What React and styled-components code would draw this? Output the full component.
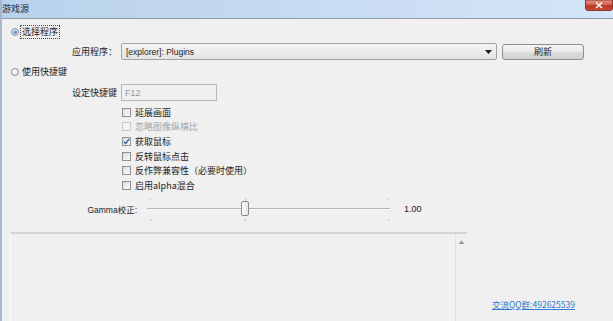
import React from 'react'
import styled, { createGlobalStyle } from 'styled-components'

const GlobalStyle = createGlobalStyle`
  html, body {
    margin: 0;
    padding: 0;
    overflow: hidden;
    background: #f0f0f0;
  }
  body {
    font-family: "Liberation Sans", "Noto Sans CJK SC", sans-serif;
    font-size: 9px;
    color: #1b1b1b;
  }
`

const options = [
  { label: '延展画面' },
  { label: '忽略图像纵横比', disabled: true },
  { label: '获取鼠标', checked: true },
  { label: '反转鼠标点击' },
  { label: '反作弊兼容性（必要时使用）' },
  { label: '启用alpha混合' },
]

const gamma = { min: 0.2, max: 2.2, value: 1 }

const CloseIcon = () => (
  <svg width="28" height="11" viewBox="0 0 28 11">
    <defs>
      <linearGradient id="closeRed" x1="0" y1="0" x2="0" y2="1">
        <stop offset="0" stopColor="#e69a8a" />
        <stop offset="0.45" stopColor="#d35a48" />
        <stop offset="0.55" stopColor="#bb3322" />
        <stop offset="1" stopColor="#cc4d38" />
      </linearGradient>
    </defs>
    <path d="M0.5 0 V8 Q0.5 10.5 3 10.5 H25 Q27.5 10.5 27.5 8 V0 Z" fill="url(#closeRed)" stroke="#8a3328" />
    <path d="M11 2.5 L17 8 M17 2.5 L11 8" stroke="#ffffff" strokeWidth="1.6" />
  </svg>
)

const App = () => {
  const trackWidth = 243
  const thumbLeft = Math.round(3 + (gamma.value - gamma.min) / (gamma.max - gamma.min) * (trackWidth - 6)) - 4

  return (
    <>
      <GlobalStyle />
      <Window>
        <TitleBar>
          <Title>游戏源</Title>
          <CloseButton aria-label="关闭">
            <CloseIcon />
          </CloseButton>
        </TitleBar>

        <Content>
          <RadioRow $top={6}>
            <Radio $checked />
            <RadioLabel $focused>选择程序</RadioLabel>
          </RadioRow>

          <FieldRow $top={4}>
            <FieldLabel>应用程序：</FieldLabel>
            <Combo>
              <ComboText>[explorer]: Plugins</ComboText>
              <svg width="7" height="4" viewBox="0 0 7 4">
                <path d="M0 0 H7 L3.5 4 Z" fill="#1a1a1a" />
              </svg>
            </Combo>
            <PushButton>刷新</PushButton>
          </FieldRow>

          <RadioRow $top={5}>
            <Radio />
            <RadioLabel>使用快捷键</RadioLabel>
          </RadioRow>

          <FieldRow $top={5}>
            <FieldLabel>设定快捷键</FieldLabel>
            <HotkeyInput>F12</HotkeyInput>
          </FieldRow>

          <CheckList>
            {options.map((o) => (
              <CheckRow key={o.label} $disabled={o.disabled}>
                <CheckBox $disabled={o.disabled}>
                  {o.checked && (
                    <svg width="7" height="7" viewBox="0 0 7 7">
                      <path d="M0.8 3.6 L2.7 5.6 L6.2 0.9" stroke="#2c4f93" strokeWidth="1.3" fill="none" />
                    </svg>
                  )}
                </CheckBox>
                <span>{o.label}</span>
              </CheckRow>
            ))}
          </CheckList>

          <GammaRow>
            <GammaLabel>Gamma校正:</GammaLabel>
            <Slider>
              <svg width={trackWidth} height="25" viewBox={`0 0 ${trackWidth} 25`}>
                <line x1="0" y1="11.5" x2={trackWidth} y2="11.5" stroke="#b3b3b3" />
                <line x1="0" y1="12.5" x2={trackWidth} y2="12.5" stroke="#fbfbfb" />
                {[3, thumbLeft + 4, trackWidth - 2].map((x) => (
                  <g key={x} stroke="#bdbdbd">
                    <line x1={x + 0.5} y1="1.5" x2={x + 0.5} y2="3.5" />
                    <line x1={x + 0.5} y1="22" x2={x + 0.5} y2="24" />
                  </g>
                ))}
              </svg>
              <Thumb style={{ left: thumbLeft }} />
            </Slider>
            <GammaValue>{gamma.value.toFixed(2)}</GammaValue>
          </GammaRow>

          <BottomRow>
            <LogBox>
              <ScrollBar>
                <svg width="7" height="4" viewBox="0 0 7 4">
                  <path d="M0.5 4 L3.5 0.5 L6.5 4 Z" fill="#9a9a9a" />
                </svg>
              </ScrollBar>
            </LogBox>
            <GroupLink href="#">交流QQ群:492625539</GroupLink>
          </BottomRow>
        </Content>
      </Window>
    </>
  )
}

export default App

const Window = styled.div`
  width: 613px;
  height: 321px;
  box-sizing: border-box;
  border-left: 2px solid #a6b9d0;
  background: #f0f0f0;
  display: flex;
  flex-direction: column;
  overflow: hidden;
`

const TitleBar = styled.div`
  height: 18px;
  flex-shrink: 0;
  display: flex;
  align-items: flex-start;
  background: linear-gradient(to right, #b9d1eb, #c8dcf2 55%, #d3e5f7);
  border-bottom: 1px solid #8d9aa9;
`

const Title = styled.span`
  line-height: 17px;
  font-family: "Noto Sans CJK SC", sans-serif;
  font-size: 9px;
  color: #1e2a38;
`

const CloseButton = styled.div`
  margin-left: auto;
  flex: 0 0 28px;
  width: 28px;
  height: 11px;

  svg {
    display: block;
  }
`

const Content = styled.div`
  flex: 1;
  display: flex;
  flex-direction: column;
  min-height: 0;
`

const RadioRow = styled.div`
  margin-top: ${(p) => p.$top}px;
  height: 14px;
  padding-left: 9px;
  display: flex;
  align-items: center;
  gap: 2px;
`

const Radio = styled.span`
  position: relative;
  width: 8px;
  height: 8px;
  box-sizing: border-box;
  border-radius: 50%;
  border: 1px solid #8c8f94;
  background: radial-gradient(circle at 40% 35%, #ffffff, #dcdcdc);

  &::after {
    content: "";
    display: ${(p) => (p.$checked ? 'block' : 'none')};
    position: absolute;
    left: 1px;
    top: 1px;
    width: 4px;
    height: 4px;
    border-radius: 50%;
    background: radial-gradient(circle at 35% 35%, #8fc3f2, #2563b3);
  }
`

const RadioLabel = styled.span`
  font-family: "Noto Sans CJK SC", sans-serif;
  line-height: 12px;
  padding: 0 1px;
  outline: ${(p) => (p.$focused ? '1px dotted #444' : 'none')};
`

const FieldRow = styled.div`
  margin-top: ${(p) => p.$top}px;
  height: 17px;
  padding-left: 70px;
  display: flex;
  align-items: center;
`

const FieldLabel = styled.span`
  width: 49px;
  font-family: "Noto Sans CJK SC", sans-serif;
  white-space: nowrap;
`

const Combo = styled.div`
  width: 376px;
  height: 17px;
  box-sizing: border-box;
  padding: 0 4px 0 4px;
  border: 1px solid #a3a3a3;
  border-radius: 2px;
  background: linear-gradient(#f4f4f4, #e3e3e3);
  display: flex;
  align-items: center;
  justify-content: space-between;
`

const ComboText = styled.span`
  font-size: 8.5px;
  color: #222;
`

const PushButton = styled.div`
  margin-left: 5px;
  width: 82px;
  height: 16px;
  box-sizing: border-box;
  border: 1px solid #8e8f8f;
  border-radius: 3px;
  background: linear-gradient(#f5f5f5, #e9e9e9 50%, #dcdcdc 51%, #d2d2d2);
  font-family: "Noto Sans CJK SC", sans-serif;
  display: flex;
  align-items: center;
  justify-content: center;
`

const HotkeyInput = styled.div`
  width: 96px;
  height: 17px;
  box-sizing: border-box;
  padding-left: 3px;
  border: 1px solid #b9b9b9;
  background: #f0f0f0;
  color: #9a9a9a;
  display: flex;
  align-items: center;
`

const CheckList = styled.div`
  margin-top: 4px;
  padding-left: 120px;
  display: flex;
  flex-direction: column;
`

const CheckRow = styled.div`
  height: 14.6px;
  display: flex;
  align-items: center;
  gap: 4px;
  font-family: "Noto Sans CJK SC", sans-serif;
  color: ${(p) => (p.$disabled ? '#a3a3a3' : '#1b1b1b')};
`

const CheckBox = styled.span`
  width: 9px;
  height: 9px;
  box-sizing: border-box;
  border: 1px solid ${(p) => (p.$disabled ? '#c6c6c6' : '#8e8f8f')};
  background: ${(p) => (p.$disabled ? '#f4f4f4' : 'linear-gradient(135deg, #dcdcdc, #fbfbfb)')};
  display: flex;
  align-items: center;
  justify-content: center;
`

const GammaRow = styled.div`
  margin-top: 4px;
  height: 25px;
  display: flex;
  align-items: center;
`

const GammaLabel = styled.span`
  width: 135px;
  text-align: right;
  font-family: "Liberation Sans", "Noto Sans CJK SC", sans-serif;
  font-size: 8.5px;
`

const Slider = styled.div`
  position: relative;
  margin-left: 10px;
  width: 243px;
  height: 25px;

  svg {
    display: block;
  }
`

const Thumb = styled.div`
  position: absolute;
  top: 4px;
  width: 8px;
  height: 15px;
  box-sizing: border-box;
  border: 1px solid #8b8b8b;
  border-radius: 2px;
  background: linear-gradient(to right, #fdfdfd, #e6e6e6);
`

const GammaValue = styled.span`
  margin-left: 14px;
  font-size: 9px;
`

const BottomRow = styled.div`
  margin-top: 10px;
  flex: 1;
  min-height: 0;
  padding-left: 8px;
  display: flex;
`

const LogBox = styled.div`
  width: 457px;
  box-sizing: border-box;
  border-top: 2px solid #d3d3d3;
  border-left: 1px solid #fafafa;
  background: #f0f0f0;
  display: flex;
  justify-content: flex-end;
`

const ScrollBar = styled.div`
  width: 12px;
  box-sizing: border-box;
  border-left: 1px solid #e1e1e1;
  display: flex;
  justify-content: center;
  padding-top: 6px;

  svg {
    display: block;
  }
`

const GroupLink = styled.a`
  align-self: flex-end;
  margin: 0 0 11px 25px;
  font-family: "Noto Sans CJK SC", sans-serif;
  font-size: 8.5px;
  color: #2f78d6;
  text-decoration: underline;
  white-space: nowrap;
`
